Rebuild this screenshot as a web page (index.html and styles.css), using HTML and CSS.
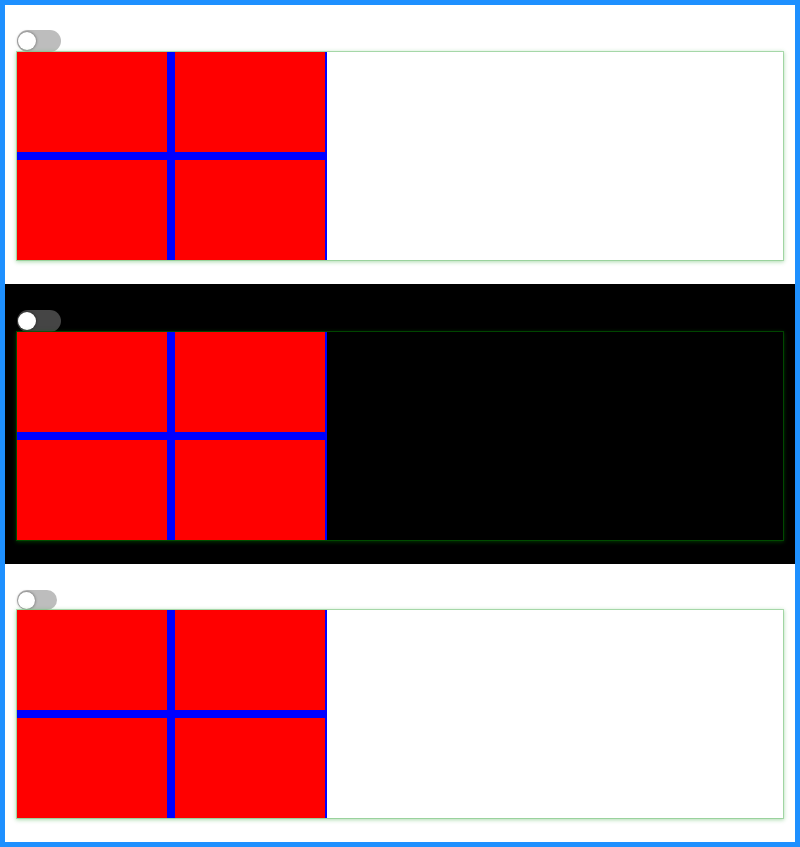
FILE: index.html
```html
<!DOCTYPE html>
<html>
<head>
<meta charset="utf-8">
<link rel="stylesheet" href="styles.css">
</head>
<body>
<div class="frame">
  <section class="panel light first">
    <div class="toggle"><span class="thumb"></span></div>
    <div class="box">
      <div class="grid"><div class="cell"></div><div class="cell"></div><div class="cell"></div><div class="cell"></div></div>
    </div>
  </section>
  <section class="panel dark">
    <div class="toggle"><span class="thumb"></span></div>
    <div class="box">
      <div class="grid"><div class="cell"></div><div class="cell"></div><div class="cell"></div><div class="cell"></div></div>
    </div>
  </section>
  <section class="panel light last">
    <div class="toggle narrow"><span class="thumb"></span></div>
    <div class="box">
      <div class="grid"><div class="cell"></div><div class="cell"></div><div class="cell"></div><div class="cell"></div></div>
    </div>
  </section>
</div>
</body>
</html>
```
FILE: styles.css
```css
html, body { margin: 0; padding: 0; }
.frame {
  box-sizing: border-box;
  width: 800px;
  height: 847px;
  border: 5px solid #1e90ff;
  display: flex;
  flex-direction: column;
}
.panel {
  box-sizing: border-box;
  height: 280px;
  padding: 26px 12px 0 12px;
  display: flex;
  flex-direction: column;
  flex: none;
}
.panel.first { height: 279px; padding-top: 25px; }
.panel.last { height: 278px; }
.light { background: #fff; }
.dark { background: #000; }
.toggle {
  width: 44px;
  height: 22px;
  border-radius: 11px;
  background: #bdbdbd;
  display: flex;
  align-items: center;
  padding-left: 1px;
  box-sizing: border-box;
}
.toggle.narrow { width: 40px; height: 20px; border-radius: 10px; }
.dark .toggle { background: #454545; }
.thumb {
  width: 18px;
  height: 18px;
  border-radius: 50%;
  background: #fff;
  box-shadow: 0 0 3px rgba(0,0,0,0.55);
}
.narrow .thumb { width: 17px; height: 17px; }
.box {
  height: 208px;
  background: inherit;
  box-shadow: 0 0 0 1px rgba(129,199,132,0.6), 0 1px 4px 1px rgba(76,175,80,0.45);
  display: flex;
}
.dark .box {
  box-shadow: 0 0 0 1px rgba(0,90,0,0.7), 0 1px 4px 1px rgba(0,110,0,0.5);
}
.grid {
  width: 308px;
  border-right: 2px solid #0000ff;
  background: #0000ff;
  display: grid;
  grid-template-columns: 150px 150px;
  grid-template-rows: 100px 100px;
  gap: 8px;
}
.cell { background: #ff0000; }
```
